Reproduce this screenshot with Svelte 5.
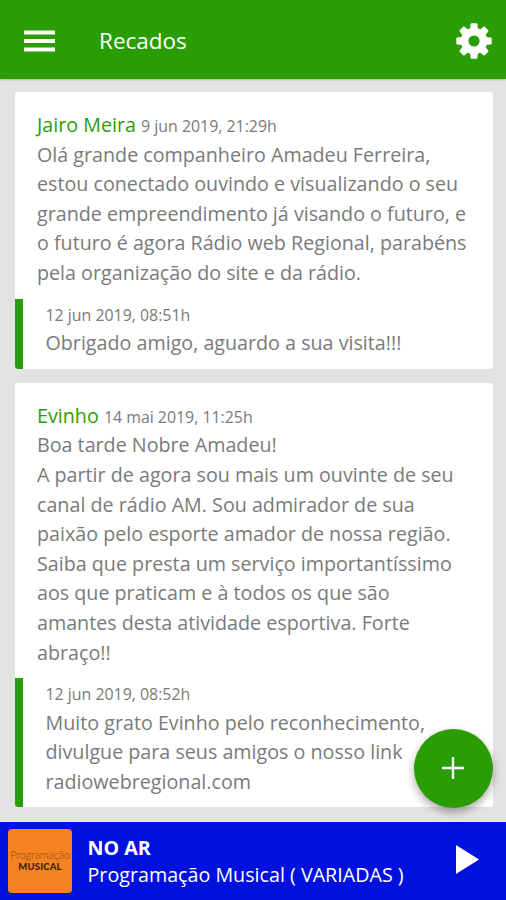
<script lang="ts">
    type Message = {
        author: string;
        date: string;
        text: string;
        reply: { date: string; text: string };
    };

    const messages: Message[] = [
        {
            author: "Jairo Meira",
            date: "9 jun 2019, 21:29h",
            text: "Olá grande companheiro Amadeu Ferreira,\nestou conectado ouvindo e visualizando o seu\ngrande empreendimento já visando o futuro, e\no futuro é agora Rádio web Regional, parabéns\npela organização do site e da rádio.",
            reply: {
                date: "12 jun 2019, 08:51h",
                text: "Obrigado amigo, aguardo a sua visita!!!",
            },
        },
        {
            author: "Evinho",
            date: "14 mai 2019, 11:25h",
            text: "Boa tarde Nobre Amadeu!\nA partir de agora sou mais um ouvinte de seu\ncanal de rádio AM. Sou admirador de sua\npaixão pelo esporte amador de nossa região.\nSaiba que presta um serviço importantíssimo\naos que praticam e à todos os que são\namantes desta atividade esportiva. Forte\nabraço!!",
            reply: {
                date: "12 jun 2019, 08:52h",
                text: "Muito grato Evinho pelo reconhecimento,\ndivulgue para seus amigos o nosso link\nradiowebregional.com",
            },
        },
    ];

    const teeth = [0, 45, 90, 135, 180, 225, 270, 315];
</script>

<div class="app">
    <header class="toolbar">
        <button class="icon-button" aria-label="Menu">
            <svg width="31" height="22" viewBox="0 0 31 22">
                <path d="M0 .5h31v4H0zM0 9h31v4H0zM0 17.5h31v4H0z" />
            </svg>
        </button>
        <h1>Recados</h1>
        <button class="icon-button" aria-label="Configurações">
            <svg width="36" height="36" viewBox="-18 -18 36 36">
                {#each teeth as angle}
                    <path
                        transform="rotate({angle})"
                        d="M-4 -11L-3.4 -16.8Q-3.3 -17.7 -2.4 -17.7H2.4Q3.3 -17.7 3.4 -16.8L4 -11Z"
                    />
                {/each}
                <circle class="ring" r="9.4" />
            </svg>
        </button>
    </header>

    <main class="messages">
        {#each messages as message}
            <article class="card">
                <div class="message">
                    <div class="meta">
                        <span class="author">{message.author}</span>
                        <span class="date">{message.date}</span>
                    </div>
                    <p>{message.text}</p>
                </div>
                <div class="reply">
                    <div class="meta"><span class="date">{message.reply.date}</span></div>
                    <p>{message.reply.text}</p>
                </div>
            </article>
        {/each}
    </main>

    <button class="fab" aria-label="Novo recado">
        <svg width="22" height="22" viewBox="0 0 22 22">
            <path d="M9.8 0h2.4v9.8H22v2.4h-9.8V22H9.8v-9.8H0V9.8h9.8z" />
        </svg>
    </button>

    <footer class="player">
        <div class="cover">
            <span class="cover-top">Programação</span>
            <span class="cover-name">MUSICAL</span>
        </div>
        <div class="track">
            <strong>NO AR</strong>
            <span class="program">Programação Musical ( VARIADAS )</span>
        </div>
        <button class="icon-button play" aria-label="Tocar">
            <svg width="23" height="29" viewBox="0 0 23 29">
                <path d="M0 0l23 14.5L0 29z" />
            </svg>
        </button>
    </footer>
</div>

<style>
    :global(body) {
        margin: 0;
        overflow: hidden;
    }

    .app {
        position: relative;
        display: flex;
        flex-direction: column;
        height: 900px;
        background: #e3e3e3;
        font-family: "Open Sans", sans-serif;
        font-size: 19.7px;
        line-height: 29.6px;
        color: #7a7a7a;
    }

    button {
        display: flex;
        align-items: center;
        justify-content: center;
        padding: 0;
        border: none;
        background: none;
    }

    svg {
        display: block;
        fill: #fff;
    }

    .ring {
        fill: #2a9d05;
        stroke: #fff;
        stroke-width: 7.6;
    }

    .toolbar {
        display: flex;
        align-items: center;
        box-sizing: border-box;
        flex: none;
        height: 79px;
        padding: 3px 14px 0 24px;
        background: #2a9d05;
        box-shadow: 0 1px 2px rgba(0, 0, 0, 0.2);
    }

    h1 {
        flex: 1;
        margin: 0 0 0 44px;
        font-size: 22.5px;
        font-weight: 400;
        color: #fff;
    }

    .messages {
        display: flex;
        flex: 1;
        flex-direction: column;
        gap: 14px;
        min-height: 0;
        padding: 13px 13.5px 0 14.5px;
    }

    .card {
        overflow: hidden;
        flex: none;
        border-radius: 3px;
        background: #fff;
    }

    .message {
        padding: 18px 0 11px 22.5px;
    }

    .reply {
        padding: 0 0 11px 23px;
        border-left: 8.5px solid #2a9d05;
    }

    .meta {
        height: 29.6px;
        white-space: nowrap;
    }

    p {
        margin: 0;
        white-space: pre;
    }

    .author {
        color: #2a9d05;
    }

    .date {
        font-size: 15.9px;
    }

    .fab {
        position: absolute;
        right: 13px;
        bottom: 92px;
        box-sizing: border-box;
        width: 79px;
        height: 79px;
        padding: 0 1px 1px 0;
        border-radius: 50%;
        background: #2a9d05;
        box-shadow: 0 4px 8px rgba(0, 0, 0, 0.35);
    }

    .player {
        display: flex;
        align-items: center;
        box-sizing: border-box;
        flex: none;
        height: 78px;
        padding: 0 27px 0 8px;
        background: #0010df;
        color: #fff;
    }

    .cover {
        display: flex;
        flex-direction: column;
        align-items: center;
        justify-content: center;
        width: 64px;
        height: 64px;
        border-radius: 4px;
        background: #f58220;
        font-family: Lato, sans-serif;
        line-height: 12px;
    }

    .cover-top {
        font-size: 10.7px;
        font-weight: 300;
        color: #8a4c1c;
    }

    .cover-name {
        font-size: 9.5px;
        font-weight: 900;
        letter-spacing: 0.2px;
        color: #3a2413;
    }

    .track {
        display: flex;
        flex: 1;
        flex-direction: column;
        margin-left: 15.5px;
        line-height: 27px;
        white-space: nowrap;
    }

    .track strong {
        font-weight: 700;
    }

    .play {
        padding-bottom: 3px;
    }
</style>
